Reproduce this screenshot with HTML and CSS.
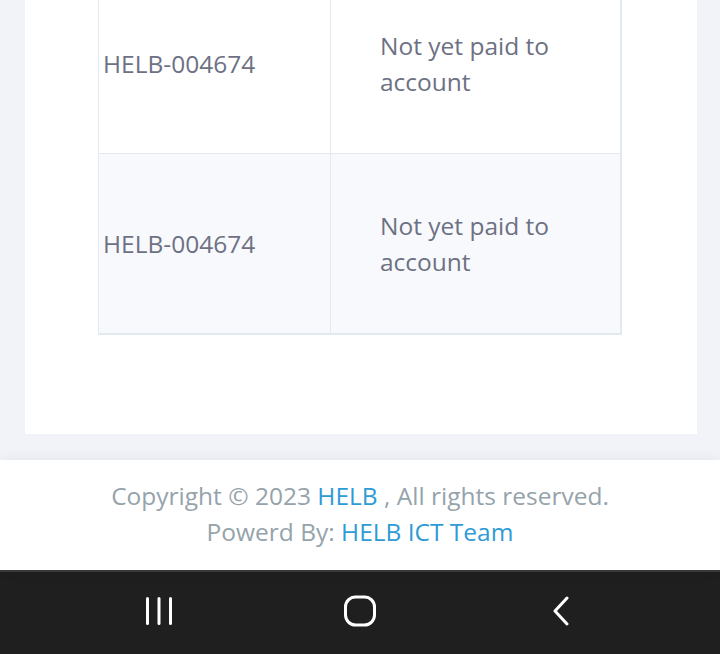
FILE: index.html
```html
<!DOCTYPE html>
<html lang="en">
<head>
  <meta charset="utf-8">
  <title>Loan Status</title>
  <link rel="stylesheet" href="styles.css">
</head>
<body>
    <div class="page">
        <div class="card">
            <div class="table-wrap">
                <table class="status-table">
                    <tr>
                        <td class="ref">HELB-004674</td>
                        <td class="status"><span>Not yet paid to account</span></td>
                    </tr>
                    <tr class="striped">
                        <td class="ref">HELB-004674</td>
                        <td class="status"><span>Not yet paid to account</span></td>
                    </tr>
                </table>
            </div>
        </div>
    </div>

    <footer class="footer">
        <p>Copyright &copy; 2023 <a href="#">HELB</a> , All rights reserved.</p>
        <p>Powerd By: <a href="#">HELB ICT Team</a></p>
    </footer>

    <div class="navbar">
        <div class="nav-btn">
            <svg width="30" height="30" viewBox="0 0 30 30">
                <rect x="2" y="1" width="3" height="28" rx="1.5" fill="#fff"/>
                <rect x="13.5" y="1" width="3" height="28" rx="1.5" fill="#fff"/>
                <rect x="25" y="1" width="3" height="28" rx="1.5" fill="#fff"/>
            </svg>
        </div>
        <div class="nav-btn">
            <svg width="34" height="32" viewBox="0 0 34 32">
                <rect x="2.5" y="2" width="29" height="28" rx="10" fill="none" stroke="#fff" stroke-width="3"/>
            </svg>
        </div>
        <div class="nav-btn">
            <svg width="22" height="30" viewBox="0 0 22 30">
                <path d="M17 2 L5 15 L17 28" fill="none" stroke="#fff" stroke-width="3" stroke-linecap="round" stroke-linejoin="round"/>
            </svg>
        </div>
    </div>
</body>
</html>
```

FILE: styles.css
```css
body {
    margin: 0;
    font-family: "Open Sans", "Noto Sans", sans-serif;
    font-size: 24.5px;
    background: #f2f3f8;
    overflow: hidden;
}
.page {
    padding: 0 23px 26px 25px;
}
.card {
    background: #fff;
    margin-top: -27px;
    padding: 0 75px 99px 73px;
}
.table-wrap {
    border-right: 1px solid #e2e9f0;
    border-bottom: 1px solid #e2e9f0;
}
.status-table {
    width: 100%;
    border-collapse: collapse;
    color: #6d7183;
    line-height: 36px;
}
.status-table td {
    border: 1px solid #e2e9f0;
    height: 179px;
    padding: 0;
    vertical-align: middle;
}
.status-table .ref {
    width: 227px;
    padding-left: 4px;
}
.status-table .status {
    padding-left: 49px;
}
.status-table .status span {
    display: block;
    width: 184px;
}
.striped {
    background: #f8f9fc;
}
.footer {
    background: #fff;
    text-align: center;
    color: #95a3ab;
    padding: 18px 0 20px;
    line-height: 36px;
    box-shadow: 0 0 14px rgba(0, 0, 0, 0.07);
    position: relative;
}
.footer p {
    margin: 0;
}
.footer a {
    color: #2f9bd6;
    text-decoration: none;
}
.navbar {
    height: 82px;
    background: #1f1f1f;
    border-top: 2px solid #3b3b3b;
    display: flex;
    justify-content: center;
    align-items: center;
    gap: 141px;
}
.nav-btn {
    width: 60px;
    display: flex;
    justify-content: center;
    align-items: center;
    margin-bottom: 4px;
}
```
